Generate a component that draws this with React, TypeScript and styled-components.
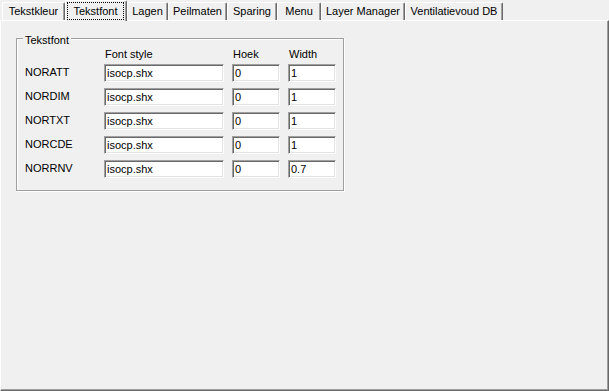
import React from "react";
import styled, { createGlobalStyle } from "styled-components";

const Global = createGlobalStyle`
  html, body { margin: 0; padding: 0; background: #f0f0f0; }
  body { font-family: "Liberation Sans", Arial, sans-serif; font-size: 11px; color: #000; }
  #root { width: 609px; height: 391px; }
`;

const Window = styled.div`
  width: 609px;
  height: 391px;
  display: flex;
  flex-direction: column;
  background: #f0f0f0;
  overflow: hidden;
`;

const TabStrip = styled.div`
  display: flex;
  align-items: flex-end;
  height: 20px;
  padding-left: 2px;
  flex-shrink: 0;
`;

const Tab = styled.div<{ $w: number; $active?: boolean }>`
  box-sizing: border-box;
  width: ${(p) => p.$w}px;
  height: ${(p) => (p.$active ? 21 : 18)}px;
  margin-bottom: ${(p) => (p.$active ? -1 : 0)}px;
  position: relative;
  z-index: ${(p) => (p.$active ? 2 : 1)};
  background: #f0f0f0;
  border-top: 1px solid #fff;
  border-left: 1px solid #fff;
  border-right: 1px solid #696969;
  box-shadow: inset -1px 0 0 #a0a0a0;
  border-radius: 2px 2px 0 0;
  display: flex;
  justify-content: center;
  align-items: flex-start;
  padding-top: ${(p) => (p.$active ? 1 : 2)}px;
  line-height: 13px;
  white-space: nowrap;
`;

const FocusRing = styled.span`
  box-sizing: border-box;
  flex: 1;
  height: 18px;
  margin: 0 2px 0 1px;
  border: 1px dotted #000;
  padding-top: 2px;
  text-align: center;
  line-height: 13px;
`;

const Panel = styled.div`
  flex: 1;
  box-sizing: border-box;
  background: #f0f0f0;
  border-top: 1px solid #fff;
  border-left: 1px solid #fff;
  border-right: 1px solid #696969;
  border-bottom: 1px solid #696969;
  box-shadow: inset -1px -1px 0 #a0a0a0;
  padding: 17px 0 0 15px;
`;

const GroupBox = styled.div`
  position: relative;
  box-sizing: border-box;
  width: 328px;
  height: 153px;
  border: 1px solid #a0a0a0;
  box-shadow: inset 1px 1px 0 #fff, 1px 1px 0 #fff;
  padding: 9px 0 0 8px;
`;

const Legend = styled.span`
  position: absolute;
  top: -5px;
  left: 6px;
  padding: 0 2px;
  background: #f0f0f0;
  line-height: 13px;
`;

const Table = styled.div`
  display: flex;
  flex-direction: column;
`;

const GridRow = styled.div`
  display: grid;
  grid-template-columns: 71px 120px 48px 48px;
  column-gap: 8px;
  align-items: start;
`;

const HeaderRow = styled(GridRow)`
  line-height: 13px;
  margin-bottom: 3px;
`;

const HeaderCell = styled.span`
  padding-left: 1px;
`;

const Rows = styled.div`
  display: flex;
  flex-direction: column;
  gap: 6px;
`;

const Label = styled.span`
  line-height: 13px;
  padding-top: 2px;
`;

const Field = styled.input`
  box-sizing: border-box;
  width: 100%;
  height: 18px;
  margin: 0;
  padding: 0 2px;
  border: 1px solid;
  border-color: #a0a0a0 #fff #fff #a0a0a0;
  box-shadow: inset 1px 1px 0 #696969, inset -1px -1px 0 #e3e3e3;
  background: #fff;
  font-family: "Liberation Sans", Arial, sans-serif;
  font-size: 11px;
  line-height: 13px;
  color: #000;
  outline: none;
`;

const tabs: { label: string; w: number; active?: boolean }[] = [
  { label: "Tekstkleur", w: 63 },
  { label: "Tekstfont", w: 62, active: true },
  { label: "Lagen", w: 41 },
  { label: "Peilmaten", w: 59 },
  { label: "Sparing", w: 50 },
  { label: "Menu", w: 44 },
  { label: "Layer Manager", w: 84 },
  { label: "Ventilatievoud DB", w: 98 },
];

const rows = [
  { name: "NORATT", font: "isocp.shx", hoek: "0", width: "1" },
  { name: "NORDIM", font: "isocp.shx", hoek: "0", width: "1" },
  { name: "NORTXT", font: "isocp.shx", hoek: "0", width: "1" },
  { name: "NORCDE", font: "isocp.shx", hoek: "0", width: "1" },
  { name: "NORRNV", font: "isocp.shx", hoek: "0", width: "0.7" },
];

export default function App() {
  return (
    <Window>
      <Global />
      <TabStrip>
        {tabs.map((t) => (
          <Tab key={t.label} $w={t.w} $active={t.active}>
            {t.active ? <FocusRing>{t.label}</FocusRing> : t.label}
          </Tab>
        ))}
      </TabStrip>
      <Panel>
        <GroupBox>
          <Legend>Tekstfont</Legend>
          <Table>
            <HeaderRow>
              <span />
              <HeaderCell>Font style</HeaderCell>
              <HeaderCell>Hoek</HeaderCell>
              <HeaderCell>Width</HeaderCell>
            </HeaderRow>
            <Rows>
              {rows.map((r) => (
                <GridRow key={r.name}>
                  <Label>{r.name}</Label>
                  <Field defaultValue={r.font} />
                  <Field defaultValue={r.hoek} />
                  <Field defaultValue={r.width} />
                </GridRow>
              ))}
            </Rows>
          </Table>
        </GroupBox>
      </Panel>
    </Window>
  );
}
